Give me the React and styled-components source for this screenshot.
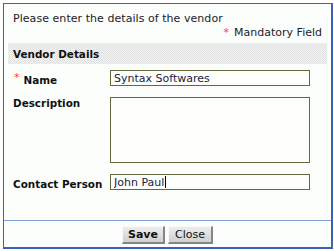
import React from 'react'
import styled, { createGlobalStyle } from 'styled-components'

const GlobalStyle = createGlobalStyle`
  html, body {
    margin: 0;
    padding: 0;
    background: #ffffff;
  }
  body {
    font-family: "DejaVu Sans", Verdana, sans-serif;
    font-size: 11px;
    color: #1a1a2a;
  }
`

const Panel = styled.div`
  margin: 3px 1px 2px 3px;
  height: 246px;
  box-sizing: border-box;
  border-style: solid;
  border-color: #3466b4;
  border-width: 1px 2px 2px 1px;
  background: #fcfefc;
  display: flex;
  flex-direction: column;
`

const Intro = styled.div`
  padding: 8px 9px 0 9px;
  line-height: 14px;
  letter-spacing: 0.05px;
`

const Mandatory = styled.div`
  padding: 0 9px;
  line-height: 14px;
  text-align: right;
`

const Star = styled.span`
  color: #ff3b3b;
  margin-right: 5px;
`

const SectionHead = styled.div`
  margin: 3px 4px 0 4px;
  height: 21px;
  padding-left: 5px;
  display: flex;
  align-items: center;
  font-weight: bold;
  font-size: 10.4px;
  color: #111;
  background: repeating-conic-gradient(#e3e3e3 0 25%, #f1f1f1 0 50%) 0 0 / 2px 2px;
`

const Form = styled.div`
  display: grid;
  grid-template-columns: 97px 200px;
  row-gap: 11px;
  padding: 6px 0 0 9px;
`

const Label = styled.label`
  font-weight: bold;
  font-size: 10.4px;
  color: #111;
  display: flex;
  align-items: ${({ $top }) => ($top ? 'flex-start' : 'center')};
  padding-top: ${({ $top }) => ($top ? '0' : '3px')};
`

const LabelStar = styled.span`
  color: #ff3b3b;
  font-weight: normal;
  font-size: 11px;
  margin: 0 4px 0 1px;
  align-self: flex-start;
  line-height: 10px;
`

const FieldWrap = styled.div`
  position: relative;
  width: 200px;
`

const TextInput = styled.input`
  box-sizing: border-box;
  width: 200px;
  height: 16px;
  margin: 0;
  padding: 0 3px;
  border: 1px solid #66683e;
  background: #fdfffd;
  font-family: "DejaVu Sans", Verdana, sans-serif;
  font-size: 11px;
  color: #1a1a40;
  outline: none;
`

const Caret = styled.span`
  position: absolute;
  top: 2px;
  left: ${({ $x }) => $x}px;
  width: 1px;
  height: 12px;
  background: #000;
  pointer-events: none;
`

const TextArea = styled.textarea`
  box-sizing: border-box;
  width: 200px;
  height: 66px;
  margin: 0;
  padding: 2px 3px;
  border: 1px solid #66683e;
  background: #fdfffd;
  font-family: "DejaVu Sans", Verdana, sans-serif;
  font-size: 11px;
  resize: none;
  outline: none;
`

const Spacer = styled.div`
  flex: 1;
`

const Footer = styled.div`
  border-top: 1px solid #7fa3d8;
  height: 27px;
  display: flex;
  justify-content: center;
  align-items: flex-start;
  gap: 3px;
  padding-top: 5px;
  box-sizing: border-box;
`

const Button = styled.button`
  box-sizing: border-box;
  height: 18px;
  padding: 0 ${({ $bold }) => ($bold ? '5px' : '6px')};
  font-family: "DejaVu Sans", Verdana, sans-serif;
  font-size: 11px;
  font-weight: ${({ $bold }) => ($bold ? 'bold' : 'normal')};
  color: #111;
  background: linear-gradient(#ededed, #d0d0d0);
  border-style: solid;
  border-width: 1px 2px 2px 1px;
  border-color: #f8f8f8 #858585 #858585 #f8f8f8;
  line-height: 14px;
`

const App = () => (
  <>
    <GlobalStyle />
    <Panel>
      <Intro>Please enter the details of the vendor</Intro>
      <Mandatory>
        <Star>*</Star>Mandatory Field
      </Mandatory>
      <SectionHead>Vendor Details</SectionHead>
      <Form>
        <Label>
          <LabelStar>*</LabelStar>Name
        </Label>
        <TextInput defaultValue="Syntax Softwares" />
        <Label $top>Description</Label>
        <TextArea />
        <Label>Contact Person</Label>
        <FieldWrap>
          <TextInput defaultValue="John Paul" />
          <Caret $x={55} />
        </FieldWrap>
      </Form>
      <Spacer />
      <Footer>
        <Button $bold>Save</Button>
        <Button>Close</Button>
      </Footer>
    </Panel>
  </>
)

export default App
